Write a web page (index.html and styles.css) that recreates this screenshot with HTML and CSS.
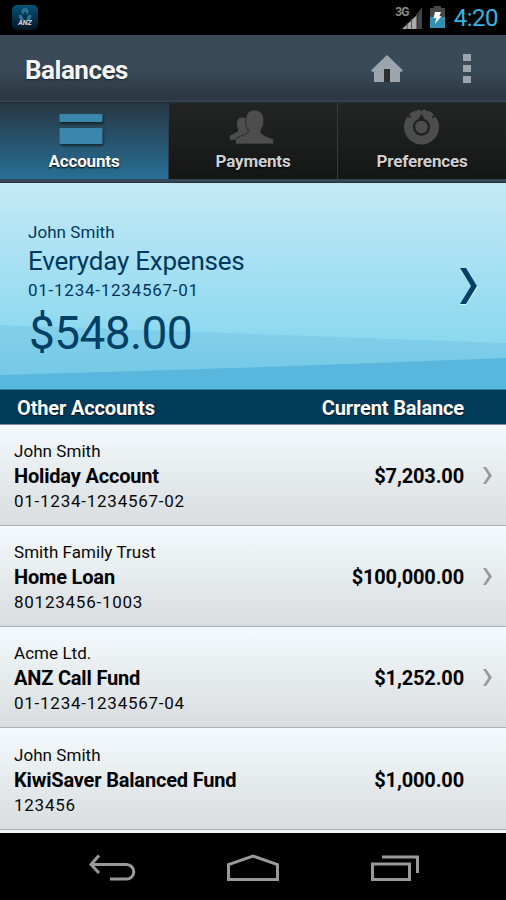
FILE: index.html
```html
<!DOCTYPE html>
<html lang="en">
<head>
    <meta charset="UTF-8">
    <title>Balances</title>
    <meta name="viewport" content="width=device-width, initial-scale=1.0">
    <link rel="stylesheet" href="styles.css">
</head>
<body>
    <div class="status-bar">
        <div class="app-badge">
            <svg width="14" height="13" viewBox="0 0 14 13">
                <g fill="#2a7299">
                    <circle cx="7" cy="3.500" r="3.500"/>
                    <path d="M1 7c3-1 5 1 5 5-3 1-6-1-5-5zM13 7c-3-1-5 1-5 5 3 1 6-1 5-5z"/>
                </g>
                <circle cx="7" cy="5.500" r="1.300" fill="#062c44"/>
                <path d="M3.500 6L7 8l3.500-2L8 12H6z" fill="#062c44"/>
            </svg>
            <span>ANZ</span>
        </div>
        <div class="status-icons">
            <span class="network">3G</span>
            <svg class="signal" width="20" height="23" viewBox="0 0 20 23">
                <path d="M0 22L15 8v14z" fill="#aaa"/>
                <path d="M15.500 6.500L20 0v22h-4.500z" fill="#444"/>
                <path d="M5.200 16v6M9.500 12v10M14.800 7v15" stroke="#555" stroke-width="1"/>
            </svg>
            <svg class="battery" width="15" height="22" viewBox="0 0 15 22">
                <path d="M4 0h7v2h4v9H0V2h4z" fill="#484848"/>
                <path d="M0 11h15v11H0z" fill="#3390b5"/>
                <path d="M5 6h6L9.400 10h2.100L5 18l1.300-6H3.500z" fill="#fff"/>
            </svg>
            <span class="clock">4:20</span>
        </div>
    </div>

    <div class="title-bar">
        <h1>Balances</h1>
        <svg class="home-icon" width="33" height="27" viewBox="0 0 33 27">
            <path d="M16 0L32 15.500l-1.200 1.300H29V27H3V16.800H1.200L0 15.500z" fill="#9ca5ae"/>
            <path d="M13 14h6v13h-6z" fill="#2e2e2e"/>
        </svg>
        <div class="menu-dots"><i></i><i></i><i></i></div>
    </div>

    <div class="tabs">
        <div class="tab active">
            <svg width="50" height="36" viewBox="0 0 50 36">
                <rect x="0.500" y="5" width="43" height="8" rx="1" fill="#3a86ad"/>
                <rect x="0.500" y="19" width="43" height="16" rx="1" fill="#3a86ad"/>
            </svg>
            <span>Accounts</span>
        </div>
        <div class="tab">
            <svg width="48" height="36" viewBox="0 0 48 36">
                <path d="M1 31v-4.500l6-3c2-1 3-2 2-4-1-1-1-3-1-5 0-4 2-6 5.500-6s5.500 2 5.500 6v10l4 3v3.500z" fill="#4d4d4d"/>
                <path d="M6.500 35v-5c1-2 9-4 12-6 1-1 1-3 0-5-1.500-1-2-3-1.500-5-1-8 2-13 8.500-13s10 5 9 12c.5 2 0 4-1.500 5-.5 3-1.500 4-1 6 2 2 6 4 12.500 6v5z" fill="#4d4d4d" stroke="#222" stroke-width=".8"/>
            </svg>
            <span>Payments</span>
        </div>
        <div class="tab">
            <svg width="36" height="36" viewBox="0 0 36 36">
                <circle cx="17.500" cy="18" r="17.500" fill="#4d4d4d"/>
                <path d="M11.500 0l.7 2M17.500 0v2M23.500 0l-.7 2M4 6.500l2.500 2M31 6.500l-2.500 2" stroke="#202221" stroke-width="1.800"/>
                <path d="M17.500 4.500l3 5.500a8.600 8.600 0 1 1-6 0z" fill="#202221"/>
                <circle cx="17.500" cy="18" r="6.300" fill="#4d4d4d"/>
            </svg>
            <span>Preferences</span>
        </div>
    </div>

    <div class="main-account">
        <svg class="waves" width="506" height="206" viewBox="0 0 506 206" preserveAspectRatio="none">
            <defs>
                <linearGradient id="wave" x1="0" y1="0" x2="0" y2="1">
                    <stop offset="0" stop-color="#83cfea"/>
                    <stop offset="1" stop-color="#70c8e6"/>
                </linearGradient>
            </defs>
            <path d="M0 142L506 160V206H0z" fill="url(#wave)"/>
            <path d="M0 192Q253 185 506 175V206H0z" fill="#59b7de"/>
        </svg>
        <div class="main-details">
            <div class="owner">John Smith</div>
            <div class="main-name">Everyday Expenses</div>
            <div class="number">01-1234-1234567-01</div>
            <div class="main-balance">$548.00</div>
        </div>
        <svg class="main-arrow" width="20" height="38" viewBox="0 0 20 38">
            <path d="M1 2h6L19 20 7 38H1l12-18z" fill="#d8f2fa"/>
            <path d="M1 1h6l11 18L7 37H1l11-18z" fill="#004165"/>
        </svg>
    </div>

    <div class="list-header">
        <span>Other Accounts</span>
        <span>Current Balance</span>
    </div>

    <div class="account">
        <div class="details">
            <div class="owner">John Smith</div>
            <div class="name">Holiday Account</div>
            <div class="number">01-1234-1234567-02</div>
        </div>
        <div class="balance">$7,203.00</div>
        <svg class="arrow" width="9" height="17" viewBox="0 0 9 17"><path d="M0 0h3l6 8.500L3 17H0l5.500-8.500z"/></svg>
    </div>
    <div class="account">
        <div class="details">
            <div class="owner">Smith Family Trust</div>
            <div class="name">Home Loan</div>
            <div class="number">80123456-1003</div>
        </div>
        <div class="balance">$100,000.00</div>
        <svg class="arrow" width="9" height="17" viewBox="0 0 9 17"><path d="M0 0h3l6 8.500L3 17H0l5.500-8.500z"/></svg>
    </div>
    <div class="account">
        <div class="details">
            <div class="owner">Acme Ltd.</div>
            <div class="name">ANZ Call Fund</div>
            <div class="number">01-1234-1234567-04</div>
        </div>
        <div class="balance">$1,252.00</div>
        <svg class="arrow" width="9" height="17" viewBox="0 0 9 17"><path d="M0 0h3l6 8.500L3 17H0l5.500-8.500z"/></svg>
    </div>
    <div class="account last">
        <div class="details">
            <div class="owner">John Smith</div>
            <div class="name">KiwiSaver Balanced Fund</div>
            <div class="number">123456</div>
        </div>
        <div class="balance">$1,000.00</div>
    </div>

    <div class="nav-bar">
        <svg width="48" height="28" viewBox="0 0 48 28">
            <path d="M11 1.500L3 10.500l8 8.500M3 10.500h35.500a7.300 7.300 0 0 1 0 14.600H22" />
        </svg>
        <svg width="54" height="28" viewBox="0 0 54 28">
            <path d="M2.500 25.500V10.500L27 2l24.500 8.500v15z"/>
        </svg>
        <svg width="50" height="28" viewBox="0 0 50 28">
            <path d="M2.500 10h37v15.500h-37zM12 3h35.500v16"/>
        </svg>
    </div>
</body>
</html>
```
FILE: styles.css
```css
* {
    box-sizing: border-box;
}
body {
    margin: 0;
    height: 900px;
    background: #000;
    font-family: Roboto, sans-serif;
    overflow: hidden;
}
svg {
    display: block;
    flex: none;
}
.status-bar {
    height: 35px;
    display: flex;
    justify-content: space-between;
    padding: 5px 9px 0 12px;
}
.app-badge {
    width: 26px;
    height: 25px;
    padding-top: 3px;
    border-radius: 5px;
    background: linear-gradient(#075478, #011521);
    display: flex;
    flex-direction: column;
    align-items: center;
}
.app-badge span {
    font-size: 7px;
    line-height: 5px;
    font-weight: 900;
    font-style: italic;
    color: #ccc;
}
.status-icons {
    display: flex;
    align-items: flex-start;
}
.network {
    font-size: 12px;
    line-height: 14px;
    font-weight: 700;
    letter-spacing: -0.8px;
    color: #888;
    margin-right: -7px;
}
.signal {
    margin-top: 2px;
}
.battery {
    margin: 1px 0 0 8px;
}
.clock {
    margin-left: 9px;
    font-size: 24px;
    line-height: 26px;
    letter-spacing: -0.5px;
    margin-right: -1px;
    color: #33b5e5;
}
.title-bar {
    height: 68px;
    display: flex;
    align-items: center;
    padding: 0 35px 0 25px;
    background: linear-gradient(#394957 0, #3a4a57 34px, #2b3742 65px, #364555 66px);
    border-bottom: 1px solid #222b34;
}
.title-bar h1 {
    flex: 1;
    margin: 0;
    padding-top: 2px;
    font-size: 26px;
    font-weight: 700;
    letter-spacing: -0.5px;
    color: #f5f5f5;
    text-shadow: 0 1px 2px #17232d;
}
.menu-dots {
    display: flex;
    flex-direction: column;
    gap: 4px;
    margin-left: 59px;
}
.menu-dots i {
    width: 8px;
    height: 7px;
    background: #9ca5ae;
}
.tabs {
    height: 80px;
    display: grid;
    grid-template-columns: 168px 169px 169px;
    background: #364656;
    border-bottom: 1px solid #28333e;
}
.tab {
    height: 76px;
    padding-top: 6px;
    display: flex;
    flex-direction: column;
    align-items: center;
    background: linear-gradient(#232524, #151716);
    border-left: 1px solid #2d3d50;
    color: #d0d0d0;
    font-size: 17px;
    line-height: 20px;
    font-weight: 700;
    letter-spacing: -0.15px;
    text-shadow: 0 1px 2px #000;
}
.tab span {
    margin-top: 6px;
}
.tab.active {
    border-left: 0;
    background: linear-gradient(#273743, #286f96);
    color: #fff;
}
.tab.active svg {
    filter: drop-shadow(1px 2px 1px rgba(0, 0, 0, 0.5));
}
.main-account {
    position: relative;
    height: 206px;
    display: flex;
    justify-content: space-between;
    padding: 37px 27px 0 28px;
    background: linear-gradient(#c4e9f5, #8bd8ef 78%);
    color: #00385f;
}
.waves {
    position: absolute;
    left: 0;
    bottom: 0;
    width: 100%;
}
.main-details {
    position: relative;
}
.owner,
.number {
    font-size: 17px;
    line-height: 24px;
}
.owner {
    letter-spacing: 0.05px;
}
.number {
    letter-spacing: 0.75px;
}
.main-name {
    font-size: 26px;
    line-height: 34px;
    letter-spacing: -0.22px;
}
.main-balance {
    margin: 8px 0 0 1px;
    font-size: 46px;
    line-height: 46px;
    letter-spacing: -0.6px;
    color: #004165;
}
.main-arrow {
    position: relative;
    margin-top: 47px;
}
.list-header {
    height: 36px;
    display: flex;
    justify-content: space-between;
    align-items: center;
    padding: 1px 42px 0 17px;
    background: #013b59;
    border-top: 1px solid #337f9f;
    border-bottom: 1px solid #838ea2;
    color: #fff;
    font-size: 20px;
    font-weight: 700;
    letter-spacing: -0.15px;
    text-shadow: 0 1px 1px #000b20;
}
.account {
    height: 101px;
    display: flex;
    align-items: center;
    padding: 2px 14px 0;
    background: linear-gradient(#f4fafd, #e6ebed 50%, #d9dde0);
    border-bottom: 1px solid #a9b1b5;
    color: #080808;
}
.account.last {
    height: 102px;
    padding-top: 3px;
}
.details {
    flex: 1;
}
.name {
    font-size: 20px;
    line-height: 26px;
    font-weight: 700;
    letter-spacing: -0.18px;
    color: #000;
}
.balance {
    margin-right: 28px;
    font-size: 20px;
    font-weight: 700;
    letter-spacing: -0.15px;
    color: #000;
}
.arrow {
    margin: 0 0 1px -9px;
    fill: #999;
}
.nav-bar {
    height: 70px;
    display: flex;
    justify-content: space-between;
    padding: 21px 86px 0 88px;
    border-top: 3px solid #f3f5f5;
    background: #000;
}
.nav-bar path {
    fill: none;
    stroke: #999;
    stroke-width: 3;
}
```
